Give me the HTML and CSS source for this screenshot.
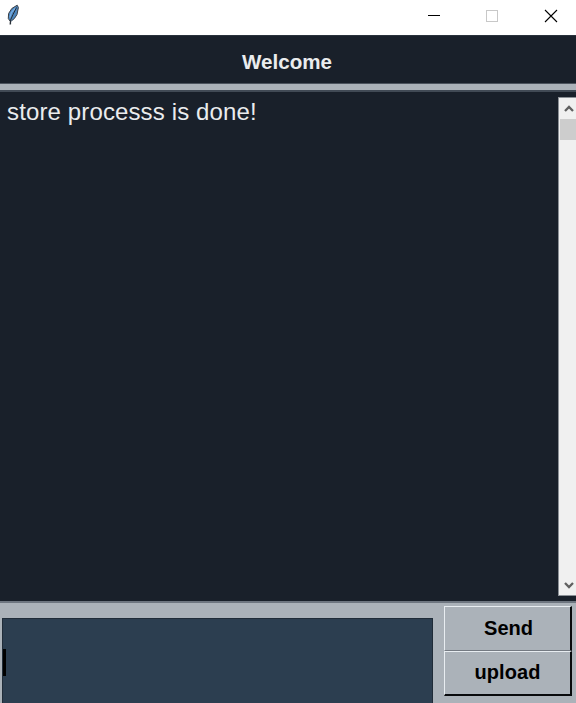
FILE: index.html
```html
<!DOCTYPE html>
<html lang="en">
<head>
<meta charset="utf-8">
<title>Chat</title>
<link rel="stylesheet" href="styles.css">
</head>
<body>
<div class="window">
  <header class="titlebar">
    <svg class="feather" width="14" height="22" viewBox="0 0 14 22">
      <path d="M4 20.5 4.3 17.5 2.3 14.5 2.6 9.5 5.8 4.5 11.2 1.2 12.4 3.5 11 10.5 8.4 14.5 5.3 17" fill="#4d86bd" stroke="#3a3f46" stroke-width="1"/>
      <path d="M3.8 13.5 5.4 8.5 9.5 4" fill="none" stroke="#76ade4" stroke-width="1.3"/>
      <path d="M4.6 20.3V16L7 10.5 10.5 3.5" fill="none" stroke="#242a32" stroke-width="1"/>
    </svg>
    <div class="controls">
      <svg width="58" height="35" viewBox="0 0 58 35" shape-rendering="crispEdges"><path d="M23 15.5h12" stroke="#000"/></svg>
      <svg width="58" height="35" viewBox="0 0 58 35"><rect x="23.5" y="10.5" width="11" height="11" fill="none" stroke="#c8c8c8"/></svg>
      <svg width="58" height="35" viewBox="0 0 58 35"><path d="m24 10 12 12m0-12-12 12" stroke="#000" stroke-width="1.1"/></svg>
    </div>
  </header>
  <h1 class="heading">Welcome</h1>
  <div class="divider"></div>
  <main class="chat">
    <p class="message">store processs is done!</p>
    <div class="scrollbar">
      <svg class="arrow" width="17" height="21" viewBox="0 0 17 21"><path d="m6 13 4-4 4 4" fill="none" stroke="#606060" stroke-width="2.3"/></svg>
      <div class="thumb"></div>
      <svg class="arrow arrow-down" width="17" height="21" viewBox="0 0 17 21"><path d="m6 9 4 4 4-4" fill="none" stroke="#606060" stroke-width="2.3"/></svg>
    </div>
  </main>
  <footer class="composer">
    <div class="entry"><span class="caret"></span></div>
    <div class="actions">
      <button class="btn btn-send">Send</button>
      <button class="btn btn-upload">upload</button>
    </div>
  </footer>
</div>
</body>
</html>
```

FILE: styles.css
```css
* { box-sizing: border-box; }
body { margin: 0; font-family: "Liberation Sans", Arial, sans-serif; }
.window { width: 576px; height: 703px; display: flex; flex-direction: column; overflow: hidden; background: #19202a; }
.titlebar { height: 35px; flex: none; background: #fff; display: flex; justify-content: space-between; padding-left: 6px; }
.feather { margin-top: 4px; }
.controls { display: flex; width: 171px; flex: none; }
.controls svg { flex: none; }
.heading { margin: 0; height: 48px; flex: none; background: #19202a; border-top: 1px solid #29323c; color: #eaecee; font-size: 20.6px; font-weight: bold; line-height: 51px; text-align: center; padding-right: 2px; }
.divider { height: 9px; flex: none; background: #abb2b9; border-top: 1px solid #4c545e; border-bottom: 2px solid #414a55; }
.chat { height: 509px; flex: none; background: #19202a; display: flex; justify-content: space-between; padding: 5px 0 5px 7px; }
.message { margin: 1px 0 0; color: #eaecee; font-size: 24px; letter-spacing: 0.13px; line-height: 27px; white-space: nowrap; }
.scrollbar { width: 18px; height: 499px; background: #f0f0f0; border: 1px solid #8b9096; border-right: 0; display: flex; flex-direction: column; }
.arrow { flex: none; display: block; }
.thumb { height: 21px; background: #cdcdcd; margin-left: 1px; flex: none; }
.arrow-down { margin-top: auto; }
.composer { flex: 1; background: #abb2b9; border-top: 2px solid #6e7680; display: flex; padding-left: 2px; }
.entry { width: 431px; margin-top: 15px; background: #2c3e50; border: 1px solid #202c38; border-bottom: 0; padding-top: 30px; }
.caret { display: block; width: 3px; height: 27px; background: #000; }
.actions { margin: 3px 0 0 11px; width: 128px; display: flex; flex-direction: column; }
.btn { width: 128px; margin: 0; padding: 0; background: #abb2b9; color: #000; font: bold 20px "Liberation Sans", Arial, sans-serif; border: 1px solid #e8edf1; border-right: 2px solid #080a0c; }
.btn-send { height: 45px; border-bottom-color: #747a82; padding-left: 2px; padding-bottom: 1px; }
.btn-upload { height: 45px; border-bottom: 2px solid #080a0c; letter-spacing: 0.1px; padding-bottom: 1px; }
```
